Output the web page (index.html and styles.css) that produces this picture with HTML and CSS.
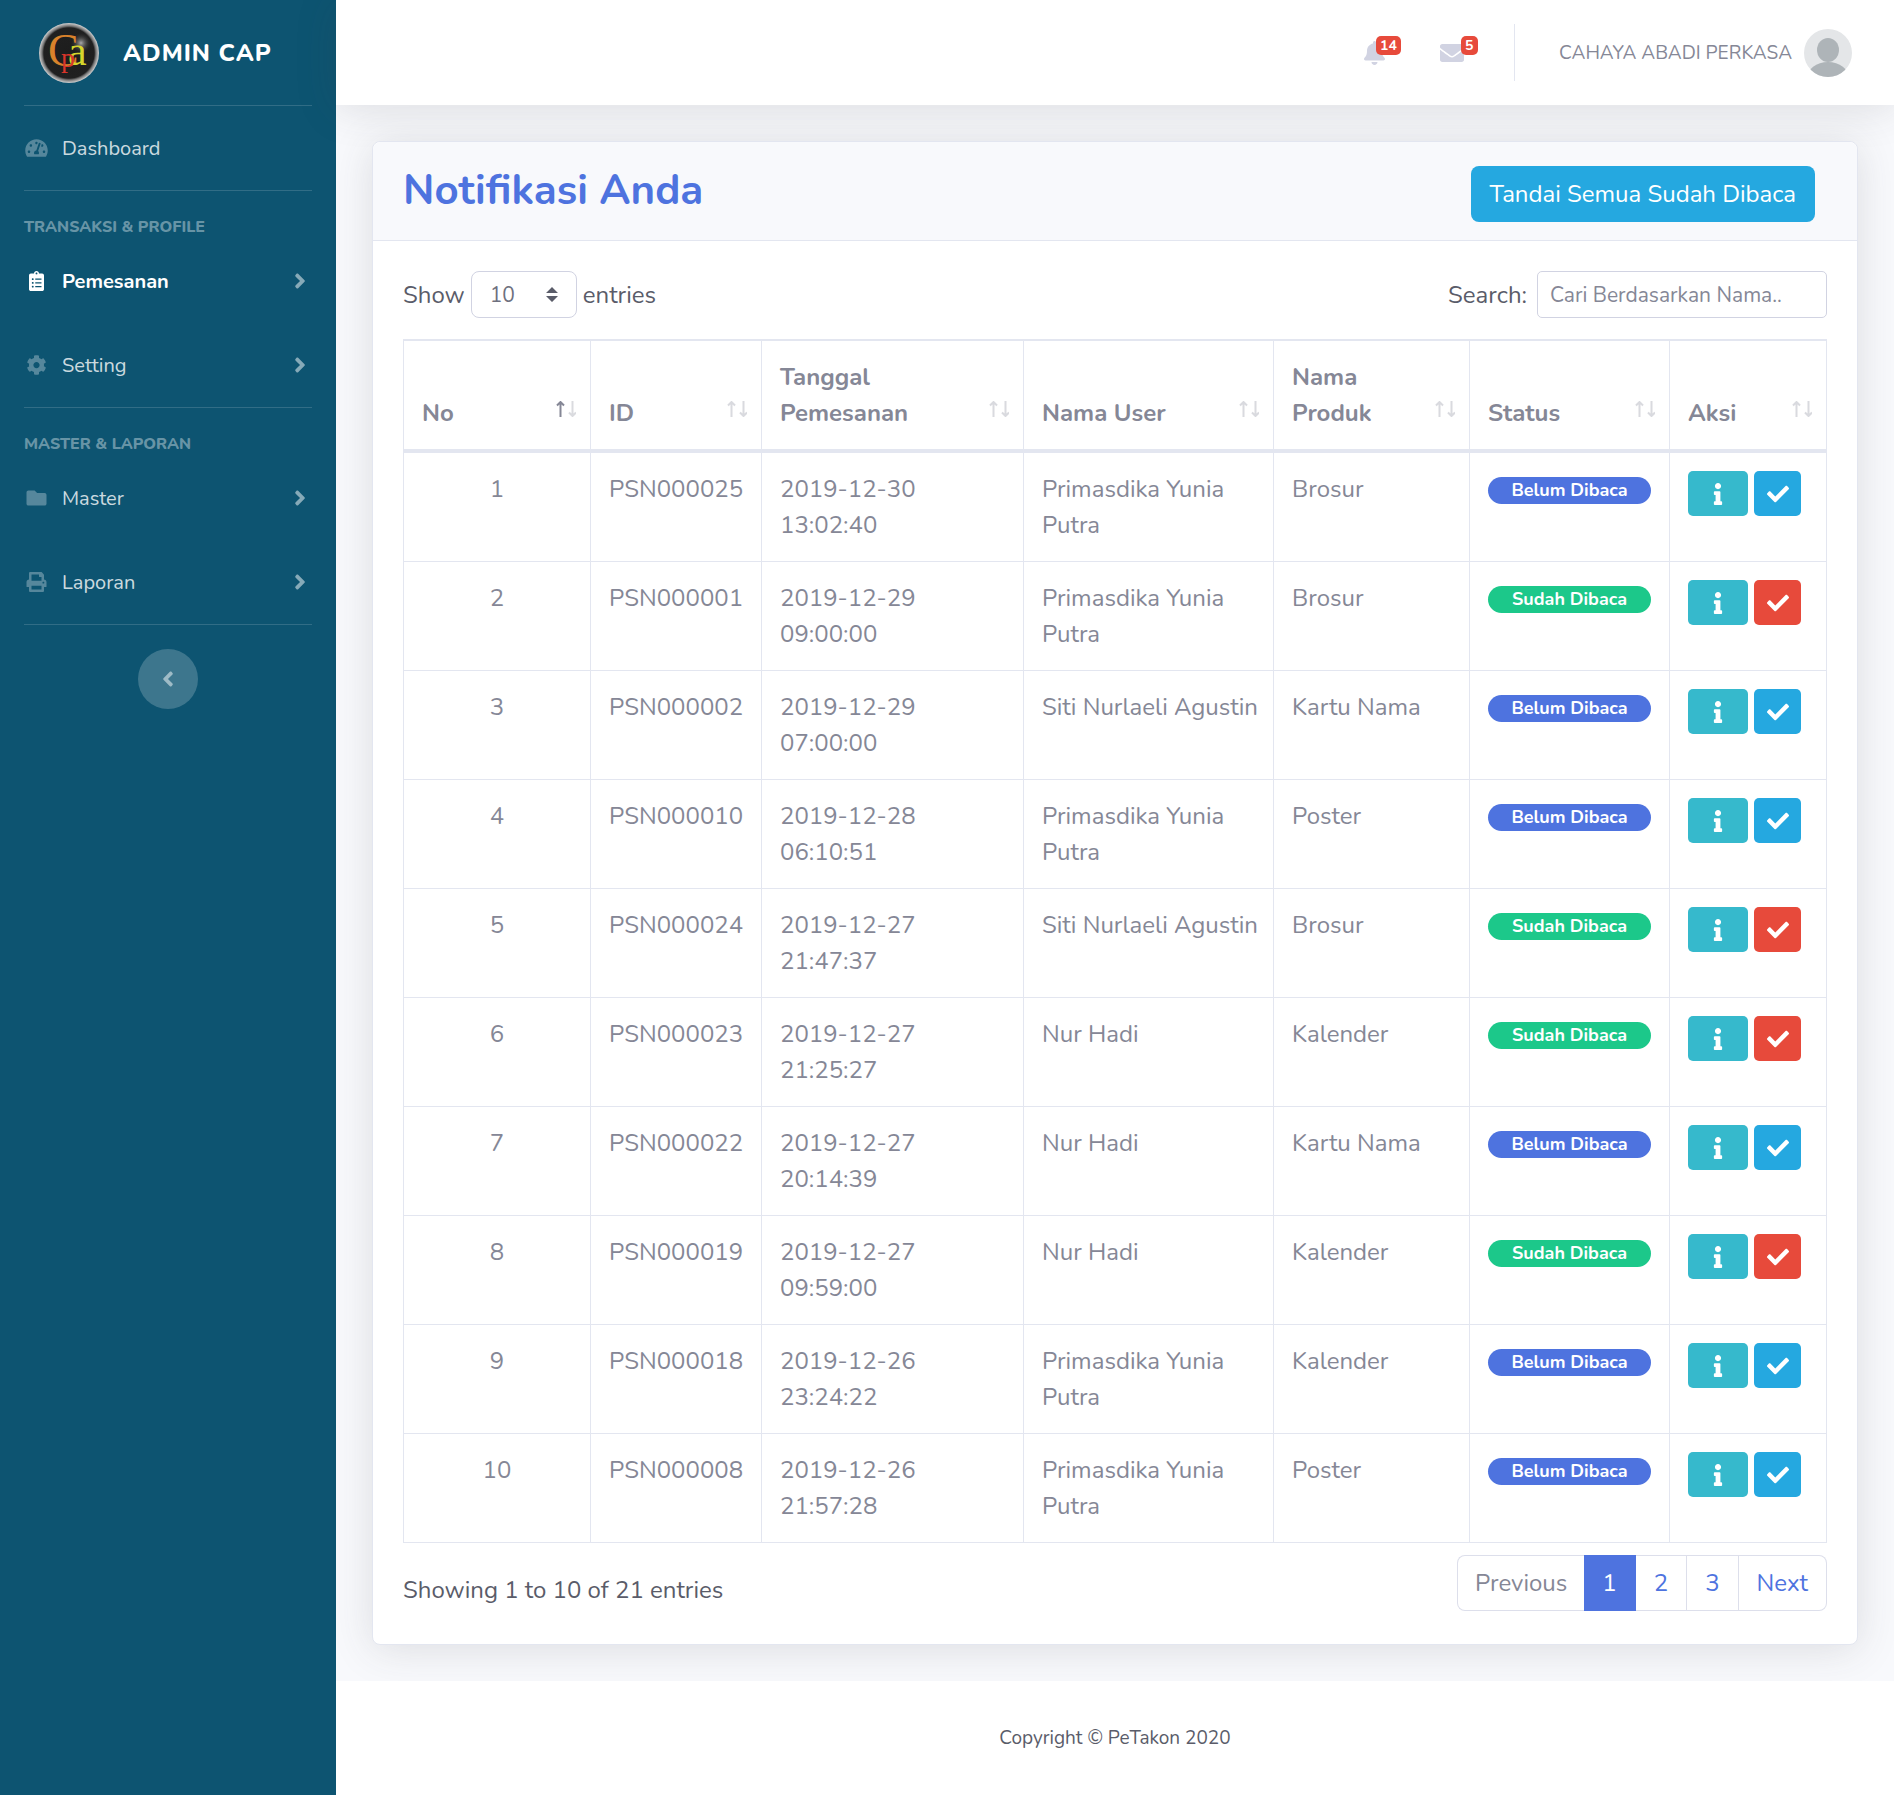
FILE: index.html
```html
<!DOCTYPE html>
<html lang="id">
<head>
<meta charset="utf-8">
<meta name="viewport" content="width=device-width, initial-scale=1">
<title>Notifikasi Anda - Admin CAP</title>
<link rel="stylesheet" href="styles.css">
</head>
<body>
<svg class="sprite" aria-hidden="true">
  <symbol id="i-dash" viewBox="0 0 576 512"><path d="M288 32C128.94 32 0 160.94 0 320c0 52.8 14.25 102.26 39.06 144.8 5.61 9.62 16.3 15.2 27.44 15.2h443c11.14 0 21.83-5.58 27.44-15.2C561.75 422.26 576 372.8 576 320c0-159.06-128.94-288-288-288zm0 64c14.71 0 26.58 10.13 30.32 23.65-1.11 2.26-2.64 4.23-3.45 6.67l-9.22 27.67c-5.13 3.49-10.97 6.01-17.64 6.01-17.67 0-32-14.33-32-32S270.33 96 288 96zM96 384c-17.67 0-32-14.33-32-32s14.33-32 32-32 32 14.33 32 32-14.33 32-32 32zm48-160c-17.67 0-32-14.33-32-32s14.33-32 32-32 32 14.33 32 32-14.33 32-32 32zm246.77-72.41l-61.33 184C343.13 347.33 352 364.54 352 384c0 11.72-3.38 22.55-8.88 32H232.88c-5.5-9.45-8.88-20.28-8.88-32 0-33.94 26.5-61.43 59.9-63.59l61.34-184.01c4.17-12.56 17.73-19.45 30.36-15.17 12.57 4.19 19.35 17.79 15.17 30.36zm14.66 57.2l15.52-46.55c3.47-1.29 7.13-2.23 11.05-2.23 17.67 0 32 14.33 32 32s-14.33 32-32 32c-11.38-.01-20.89-6.28-26.57-15.22zM480 384c-17.67 0-32-14.33-32-32s14.33-32 32-32 32 14.33 32 32-14.33 32-32 32z"/></symbol>
  <symbol id="i-clip" viewBox="0 0 384 512"><path d="M336 64h-80c0-35.3-28.7-64-64-64s-64 28.7-64 64H48C21.5 64 0 85.5 0 112v352c0 26.5 21.5 48 48 48h288c26.5 0 48-21.5 48-48V112c0-26.5-21.5-48-48-48zM96 424c-13.3 0-24-10.7-24-24s10.7-24 24-24 24 10.7 24 24-10.7 24-24 24zm0-96c-13.3 0-24-10.7-24-24s10.7-24 24-24 24 10.7 24 24-10.7 24-24 24zm0-96c-13.3 0-24-10.7-24-24s10.7-24 24-24 24 10.7 24 24-10.7 24-24 24zm96-192c13.3 0 24 10.7 24 24s-10.7 24-24 24-24-10.7-24-24 10.7-24 24-24zm128 368c0 4.4-3.6 8-8 8H168c-4.4 0-8-3.6-8-8v-16c0-4.4 3.6-8 8-8h144c4.4 0 8 3.6 8 8v16zm0-96c0 4.4-3.6 8-8 8H168c-4.4 0-8-3.6-8-8v-16c0-4.4 3.6-8 8-8h144c4.4 0 8 3.6 8 8v16zm0-96c0 4.4-3.6 8-8 8H168c-4.4 0-8-3.6-8-8v-16c0-4.4 3.6-8 8-8h144c4.4 0 8 3.6 8 8v16z"/></symbol>
  <symbol id="i-cog" viewBox="0 0 512 512"><path d="M487.4 315.7l-42.6-24.6c4.3-23.2 4.3-47 0-70.2l42.6-24.6c4.9-2.8 7.1-8.6 5.5-14-11.1-35.6-30-67.8-54.7-94.6-3.8-4.1-10-5.1-14.8-2.3L380.8 110c-17.9-15.4-38.5-27.3-60.8-35.1V25.8c0-5.6-3.9-10.5-9.4-11.7-36.7-8.2-74.3-7.8-109.2 0-5.5 1.2-9.4 6.1-9.4 11.7V75c-22.2 7.9-42.8 19.8-60.8 35.1L88.7 85.5c-4.9-2.8-11-1.9-14.8 2.3-24.7 26.7-43.6 58.9-54.7 94.6-1.7 5.4.6 11.2 5.5 14L67.3 221c-4.3 23.2-4.3 47 0 70.2l-42.6 24.6c-4.9 2.8-7.1 8.6-5.5 14 11.1 35.6 30 67.8 54.7 94.6 3.8 4.1 10 5.1 14.8 2.3l42.6-24.6c17.9 15.4 38.5 27.3 60.8 35.1v49.2c0 5.6 3.9 10.5 9.4 11.7 36.7 8.2 74.3 7.8 109.2 0 5.5-1.2 9.4-6.1 9.4-11.7v-49.2c22.2-7.9 42.8-19.8 60.8-35.1l42.6 24.6c4.9 2.8 11 1.9 14.8-2.3 24.7-26.7 43.6-58.9 54.7-94.6 1.5-5.5-.7-11.3-5.6-14.1zM256 336c-44.1 0-80-35.9-80-80s35.9-80 80-80 80 35.9 80 80-35.9 80-80 80z"/></symbol>
  <symbol id="i-folder" viewBox="0 0 512 512"><path d="M464 128H272l-64-64H48C21.49 64 0 85.49 0 112v288c0 26.51 21.49 48 48 48h416c26.51 0 48-21.49 48-48V176c0-26.51-21.49-48-48-48z"/></symbol>
  <symbol id="i-print" viewBox="0 0 512 512"><path d="M448 192V77.25c0-8.49-3.37-16.62-9.37-22.63L393.37 9.37c-6-6-14.14-9.37-22.63-9.37H96C78.33 0 64 14.33 64 32v160c-35.35 0-64 28.65-64 64v112c0 8.84 7.16 16 16 16h48v96c0 17.67 14.33 32 32 32h320c17.67 0 32-14.33 32-32v-96h48c8.84 0 16-7.16 16-16V256c0-35.35-28.65-64-64-64zm-64 256H128v-96h256v96zm0-224H128V64h192v48c0 8.84 7.16 16 16 16h48v96zm48 72c-13.25 0-24-10.75-24-24 0-13.26 10.75-24 24-24s24 10.74 24 24c0 13.25-10.75 24-24 24z"/></symbol>
  <symbol id="i-angle" viewBox="0 0 256 512"><path d="M224.3 273l-136 136c-9.4 9.4-24.6 9.4-33.9 0l-22.6-22.6c-9.4-9.4-9.4-24.6 0-33.9l96.4-96.4-96.4-96.4c-9.4-9.4-9.4-24.6 0-33.9L54.3 103c9.4-9.4 24.6-9.4 33.9 0l136 136c9.5 9.4 9.5 24.6.1 34z"/></symbol>
  <symbol id="i-bell" viewBox="0 0 448 512"><path d="M224 512c35.32 0 63.97-28.65 63.97-64H160.03c0 35.35 28.65 64 63.97 64zm215.39-149.71c-19.32-20.76-55.47-51.99-55.47-154.29 0-77.7-54.48-139.9-127.94-155.16V32c0-17.67-14.32-32-31.98-32s-31.98 14.33-31.98 32v20.84C118.56 68.1 64.08 130.3 64.08 208c0 102.3-36.15 133.53-55.47 154.29-6 6.45-8.66 14.16-8.61 21.71.11 16.4 12.98 32 32.1 32h383.8c19.12 0 32-15.6 32.1-32 .05-7.55-2.61-15.27-8.61-21.71z"/></symbol>
  <symbol id="i-mail" viewBox="0 0 512 512"><path d="M502.3 190.8c3.9-3.1 9.7-.2 9.7 4.7V400c0 26.5-21.5 48-48 48H48c-26.5 0-48-21.5-48-48V195.6c0-5 5.7-7.8 9.7-4.7 22.4 17.4 52.1 39.5 154.1 113.6 21.1 15.4 56.7 47.8 92.2 47.6 35.7.3 72-32.8 92.3-47.6 102-74.1 131.6-96.3 154-113.7zM256 320c23.2.4 56.6-29.2 73.4-41.4 132.7-96.3 142.8-104.7 173.4-128.7 5.8-4.5 9.2-11.5 9.2-18.9v-19c0-26.5-21.5-48-48-48H48c-26.5 0-48 21.5-48 48v19c0 7.4 3.4 14.3 9.2 18.9 30.6 23.9 40.7 32.4 173.4 128.7 16.8 12.2 50.2 41.8 73.4 41.4z"/></symbol>
  <symbol id="i-info" viewBox="0 0 192 512"><path d="M20 424.229h20V279.771H20c-11.046 0-20-8.954-20-20V212c0-11.046 8.954-20 20-20h112c11.046 0 20 8.954 20 20v212.229h20c11.046 0 20 8.954 20 20V492c0 11.046-8.954 20-20 20H20c-11.046 0-20-8.954-20-20v-47.771c0-11.046 8.954-20 20-20zM96 0C56.235 0 24 32.235 24 72s32.235 72 72 72 72-32.235 72-72S135.764 0 96 0z"/></symbol>
  <symbol id="i-check" viewBox="0 0 512 512"><path d="M173.898 439.404l-166.4-166.4c-9.997-9.997-9.997-26.206 0-36.204l36.203-36.204c9.997-9.998 26.207-9.998 36.204 0L192 312.69 432.095 72.596c9.997-9.997 26.207-9.997 36.204 0l36.203 36.204c9.997 9.997 9.997 26.206 0 36.204l-294.4 294.401c-9.998 9.997-26.207 9.997-36.204-.001z"/></symbol>
  <symbol id="i-sort" viewBox="0 0 20 16"><path class="up" d="M4.5 16V1.5M1 4.5L4.5 1L8 4.5"/><path class="down" d="M16.5 0V14.5M13 11.5L16.5 15L20 11.5"/></symbol>
</svg>

<div class="wrapper">
  <nav class="sidebar" aria-label="Menu utama">
    <a class="brand" href="#">
      <svg class="logo" viewBox="0 0 60 60" role="img" aria-label="Logo CAP">
        <defs>
          <radialGradient id="disc"><stop offset="0" stop-color="#1d1d1d"/><stop offset=".84" stop-color="#202020"/><stop offset=".9" stop-color="#777"/><stop offset="1" stop-color="#d2d2d2"/></radialGradient>
          <radialGradient id="shine"><stop offset="0" stop-color="#aaa"/><stop offset="1" stop-color="#333" stop-opacity="0"/></radialGradient>
        </defs>
        <circle cx="30" cy="30" r="30" fill="url(#disc)"/>
        <circle cx="42" cy="20" r="10" fill="url(#shine)"/>
        <text class="logo-letter" x="9" y="43" font-size="46" fill="#d9822b">C</text>
        <text class="logo-letter" x="29" y="42" font-size="42" fill="#d6d62c">a</text>
        <text class="logo-letter" x="22" y="44" font-size="28" fill="#d8352a">p</text>
      </svg>
      <span>ADMIN CAP</span>
    </a>
    <hr>
    <a class="nav-link" href="#"><svg><use href="#i-dash"/></svg><span>Dashboard</span></a>
    <hr>
    <div class="nav-heading">TRANSAKSI &amp; PROFILE</div>
    <a class="nav-link active" href="#"><svg><use href="#i-clip"/></svg><span>Pemesanan</span><svg class="angle"><use href="#i-angle"/></svg></a>
    <a class="nav-link" href="#"><svg><use href="#i-cog"/></svg><span>Setting</span><svg class="angle"><use href="#i-angle"/></svg></a>
    <hr>
    <div class="nav-heading">MASTER &amp; LAPORAN</div>
    <a class="nav-link" href="#"><svg><use href="#i-folder"/></svg><span>Master</span><svg class="angle"><use href="#i-angle"/></svg></a>
    <a class="nav-link" href="#"><svg><use href="#i-print"/></svg><span>Laporan</span><svg class="angle"><use href="#i-angle"/></svg></a>
    <hr>
    <button class="toggle" type="button" aria-label="Ciutkan menu"><svg><use href="#i-angle"/></svg></button>
  </nav>

  <div class="content">
    <header class="topbar">
      <a class="alert-link" href="#" aria-label="Notifikasi"><svg class="bell"><use href="#i-bell"/></svg><span class="counter">14</span></a>
      <a class="alert-link" href="#" aria-label="Pesan"><svg class="mail"><use href="#i-mail"/></svg><span class="counter">5</span></a>
      <a class="user" href="#"><span>CAHAYA ABADI PERKASA</span>
        <svg class="avatar" viewBox="0 0 48 48" aria-hidden="true"><defs><clipPath id="round"><circle cx="24" cy="24" r="24"/></clipPath></defs><g clip-path="url(#round)"><rect width="48" height="48" fill="#e4e6e8"/><ellipse cx="24" cy="21" rx="11" ry="12" fill="#aeb4b8"/><ellipse cx="24" cy="49" rx="21" ry="16" fill="#aeb4b8"/></g></svg>
      </a>
    </header>

    <main>
      <section class="card">
        <div class="card-header">
          <h1>Notifikasi Anda</h1>
          <button class="btn-all" type="button">Tandai Semua Sudah Dibaca</button>
        </div>
        <div class="card-body">
          <div class="controls">
            <label>Show <select><option>10</option><option>25</option><option>50</option><option>100</option></select> entries</label>
            <label class="search">Search: <input type="search" placeholder="Cari Berdasarkan Nama.."></label>
          </div>
          <table>
            <colgroup><col class="c-no"><col class="c-id"><col class="c-date"><col class="c-user"><col class="c-product"><col class="c-status"><col class="c-action"></colgroup>
            <thead>
              <tr>
                <th><div class="th sorted"><span>No</span><svg><use href="#i-sort"/></svg></div></th>
                <th><div class="th"><span>ID</span><svg><use href="#i-sort"/></svg></div></th>
                <th><div class="th"><span>Tanggal Pemesanan</span><svg><use href="#i-sort"/></svg></div></th>
                <th><div class="th"><span>Nama User</span><svg><use href="#i-sort"/></svg></div></th>
                <th><div class="th"><span>Nama Produk</span><svg><use href="#i-sort"/></svg></div></th>
                <th><div class="th"><span>Status</span><svg><use href="#i-sort"/></svg></div></th>
                <th><div class="th"><span>Aksi</span><svg><use href="#i-sort"/></svg></div></th>
              </tr>
            </thead>
            <tbody>
              <tr><td>1</td><td>PSN000025</td><td>2019-12-30 13:02:40</td><td>Primasdika Yunia Putra</td><td>Brosur</td><td><span class="badge unread">Belum Dibaca</span></td><td><div class="actions"><button class="info" aria-label="Detail"><svg><use href="#i-info"/></svg></button><button class="mark" aria-label="Tandai"><svg><use href="#i-check"/></svg></button></div></td></tr>
              <tr><td>2</td><td>PSN000001</td><td>2019-12-29 09:00:00</td><td>Primasdika Yunia Putra</td><td>Brosur</td><td><span class="badge read">Sudah Dibaca</span></td><td><div class="actions"><button class="info" aria-label="Detail"><svg><use href="#i-info"/></svg></button><button class="mark done" aria-label="Tandai"><svg><use href="#i-check"/></svg></button></div></td></tr>
              <tr><td>3</td><td>PSN000002</td><td>2019-12-29 07:00:00</td><td>Siti Nurlaeli Agustin</td><td>Kartu Nama</td><td><span class="badge unread">Belum Dibaca</span></td><td><div class="actions"><button class="info" aria-label="Detail"><svg><use href="#i-info"/></svg></button><button class="mark" aria-label="Tandai"><svg><use href="#i-check"/></svg></button></div></td></tr>
              <tr><td>4</td><td>PSN000010</td><td>2019-12-28 06:10:51</td><td>Primasdika Yunia Putra</td><td>Poster</td><td><span class="badge unread">Belum Dibaca</span></td><td><div class="actions"><button class="info" aria-label="Detail"><svg><use href="#i-info"/></svg></button><button class="mark" aria-label="Tandai"><svg><use href="#i-check"/></svg></button></div></td></tr>
              <tr><td>5</td><td>PSN000024</td><td>2019-12-27 21:47:37</td><td>Siti Nurlaeli Agustin</td><td>Brosur</td><td><span class="badge read">Sudah Dibaca</span></td><td><div class="actions"><button class="info" aria-label="Detail"><svg><use href="#i-info"/></svg></button><button class="mark done" aria-label="Tandai"><svg><use href="#i-check"/></svg></button></div></td></tr>
              <tr><td>6</td><td>PSN000023</td><td>2019-12-27 21:25:27</td><td>Nur Hadi</td><td>Kalender</td><td><span class="badge read">Sudah Dibaca</span></td><td><div class="actions"><button class="info" aria-label="Detail"><svg><use href="#i-info"/></svg></button><button class="mark done" aria-label="Tandai"><svg><use href="#i-check"/></svg></button></div></td></tr>
              <tr><td>7</td><td>PSN000022</td><td>2019-12-27 20:14:39</td><td>Nur Hadi</td><td>Kartu Nama</td><td><span class="badge unread">Belum Dibaca</span></td><td><div class="actions"><button class="info" aria-label="Detail"><svg><use href="#i-info"/></svg></button><button class="mark" aria-label="Tandai"><svg><use href="#i-check"/></svg></button></div></td></tr>
              <tr><td>8</td><td>PSN000019</td><td>2019-12-27 09:59:00</td><td>Nur Hadi</td><td>Kalender</td><td><span class="badge read">Sudah Dibaca</span></td><td><div class="actions"><button class="info" aria-label="Detail"><svg><use href="#i-info"/></svg></button><button class="mark done" aria-label="Tandai"><svg><use href="#i-check"/></svg></button></div></td></tr>
              <tr><td>9</td><td>PSN000018</td><td>2019-12-26 23:24:22</td><td>Primasdika Yunia Putra</td><td>Kalender</td><td><span class="badge unread">Belum Dibaca</span></td><td><div class="actions"><button class="info" aria-label="Detail"><svg><use href="#i-info"/></svg></button><button class="mark" aria-label="Tandai"><svg><use href="#i-check"/></svg></button></div></td></tr>
              <tr><td>10</td><td>PSN000008</td><td>2019-12-26 21:57:28</td><td>Primasdika Yunia Putra</td><td>Poster</td><td><span class="badge unread">Belum Dibaca</span></td><td><div class="actions"><button class="info" aria-label="Detail"><svg><use href="#i-info"/></svg></button><button class="mark" aria-label="Tandai"><svg><use href="#i-check"/></svg></button></div></td></tr>
            </tbody>
          </table>
          <div class="table-footer">
            <div>Showing 1 to 10 of 21 entries</div>
            <nav class="pagination" aria-label="Halaman">
              <a class="disabled" href="#">Previous</a><a class="current" href="#">1</a><a href="#">2</a><a href="#">3</a><a href="#">Next</a>
            </nav>
          </div>
        </div>
      </section>
    </main>

    <footer>Copyright © PeTakon 2020</footer>
  </div>
</div>
</body>
</html>
```
FILE: styles.css
```css
* {
  box-sizing: border-box;
}

body {
  margin: 0;
  font-family: Nunito, Lato, "Open Sans", sans-serif;
  font-size: 24px;
  line-height: 36px;
  color: #5a5c69;
  background: #f8f9fc;
}

a {
  text-decoration: none;
}

button,
input,
select {
  font-family: inherit;
}

button {
  border: 0;
  padding: 0;
  cursor: pointer;
}

svg {
  fill: currentColor;
  flex: none;
}

.sprite {
  display: none;
}

.wrapper {
  display: flex;
  min-height: 100vh;
}

/* Sidebar */
.sidebar {
  flex: none;
  width: 336px;
  display: flex;
  flex-direction: column;
  background: #0d5471;
}

.brand {
  height: 105px;
  padding-left: 39px;
  display: flex;
  align-items: center;
  gap: 24px;
  color: #fff;
  font-weight: 800;
  letter-spacing: 1px;
}

.logo {
  width: 60px;
  height: 60px;
}

.logo-letter {
  font-family: "Liberation Serif", serif;
  letter-spacing: 0;
  font-weight: 400;
}

.sidebar hr {
  width: 288px;
  height: 1px;
  margin: 0 24px;
  border: 0;
  background: rgba(255, 255, 255, 0.15);
}

.nav-heading {
  margin-top: 24px;
  padding: 0 24px;
  font-size: 16px;
  line-height: 24px;
  font-weight: 800;
  color: rgba(255, 255, 255, 0.4);
}

.nav-link {
  height: 84px;
  padding: 0 30px 0 24px;
  display: flex;
  align-items: center;
  gap: 13px;
  font-size: 20px;
  color: rgba(255, 255, 255, 0.8);
}

.nav-link span {
  flex: 1;
  padding-top: 2px;
}

.nav-link svg {
  width: 25px;
  height: 20px;
  color: rgba(255, 255, 255, 0.3);
}

.nav-link .angle {
  width: 12px;
  height: 24px;
  color: rgba(255, 255, 255, 0.5);
}

.nav-link.active {
  font-weight: 700;
  color: #fff;
}

.nav-link.active svg:first-child {
  color: #fff;
}

.toggle {
  align-self: center;
  width: 60px;
  height: 60px;
  margin-top: 24px;
  border-radius: 50%;
  background: rgba(255, 255, 255, 0.2);
  color: rgba(255, 255, 255, 0.5);
  display: flex;
  align-items: center;
  justify-content: center;
}

.toggle svg {
  width: 12px;
  height: 24px;
  transform: rotate(180deg);
}

/* Top bar */
.content {
  flex: 1;
  min-width: 0;
  display: flex;
  flex-direction: column;
}

.topbar {
  height: 105px;
  padding-right: 42px;
  display: flex;
  align-items: center;
  justify-content: flex-end;
  background: #fff;
  box-shadow: 0 4px 42px rgba(58, 59, 69, 0.15);
}

.alert-link {
  position: relative;
  width: 77px;
  height: 60px;
  display: flex;
  align-items: center;
  justify-content: center;
  color: #d1d3e2;
}

.bell {
  width: 21px;
  height: 24px;
}

.mail {
  width: 24px;
  height: 24px;
}

.counter {
  position: absolute;
  left: 40px;
  top: 13px;
  padding: 0 4px;
  border-radius: 5px;
  background: #e74a3b;
  color: #fff;
  font-size: 14px;
  line-height: 19px;
  font-weight: 700;
}

.mail + .counter {
  left: 48px;
}

.user {
  height: 57px;
  margin-left: 24px;
  padding-left: 44px;
  border-left: 1px solid #e3e6f0;
  display: flex;
  align-items: center;
  gap: 12px;
  font-size: 19px;
  color: #858796;
}

.avatar {
  width: 48px;
  height: 48px;
}

/* Card */
main {
  padding: 36px;
}

.card {
  border: 1px solid #e3e6f0;
  border-radius: 8px;
  background: #fff;
  box-shadow: 0 4px 42px rgba(58, 59, 69, 0.15);
}

.card-header {
  padding: 24px 42px 18px 30px;
  display: flex;
  align-items: flex-start;
  justify-content: space-between;
  border-bottom: 1px solid #e3e6f0;
  border-radius: 8px 8px 0 0;
  background: #f8f9fc;
}

h1 {
  margin: 0;
  font-size: 42px;
  line-height: 50px;
  font-weight: 700;
  color: #4e73df;
}

.btn-all {
  height: 56px;
  padding: 0 19px;
  border-radius: 8px;
  background: #25a8e0;
  color: #fff;
  font-size: 24px;
}

.card-body {
  padding: 30px 30px 33px;
}

.controls {
  display: flex;
  justify-content: space-between;
  margin-bottom: 21px;
}

.controls label {
  display: flex;
  align-items: center;
  gap: 6px;
}

.controls .search {
  gap: 10px;
}

select,
input {
  height: 47px;
  border: 1px solid #d1d3e2;
  background-color: #fff;
  color: #6e707e;
  font-size: 21px;
}

select {
  width: 106px;
  padding: 0 18px;
  border-radius: 8px;
  appearance: none;
  background-image: url("data:image/svg+xml,%3Csvg xmlns='http://www.w3.org/2000/svg' viewBox='0 0 4 5'%3E%3Cpath fill='%235a5c69' d='M2 0L0 2h4zm0 5L0 3h4z'/%3E%3C/svg%3E");
  background-repeat: no-repeat;
  background-position: right 18px center;
  background-size: 12px 15px;
}

input {
  width: 290px;
  padding: 0 12px;
  border-radius: 5px;
}

input::placeholder {
  color: #858796;
  opacity: 1;
}

/* Table */
table {
  width: 100%;
  table-layout: fixed;
  border-collapse: separate;
  border-spacing: 0;
  border-left: 1px solid #e3e6f0;
  border-top: 2px solid #e3e6f0;
  color: #858796;
}

.c-no { width: 187px; }
.c-id { width: 171px; }
.c-date { width: 262px; }
.c-user { width: 250px; }
.c-product { width: 196px; }
.c-status { width: 200px; }
.c-action { width: 157px; }

th,
td {
  border-right: 1px solid #e3e6f0;
  border-bottom: 1px solid #e3e6f0;
  text-align: left;
}

th {
  padding: 18px 14px 18px 18px;
  border-bottom-width: 4px;
  vertical-align: bottom;
}

td {
  height: 109px;
  padding: 18px;
  vertical-align: top;
}

td:first-child {
  text-align: center;
}

td:nth-child(4) {
  padding-right: 12px;
}

.th {
  display: flex;
  align-items: flex-end;
  justify-content: space-between;
  gap: 24px;
}

.th svg {
  width: 20px;
  height: 16px;
  margin-bottom: 14px;
  fill: none;
  stroke: #858796;
  stroke-width: 2;
  opacity: 0.3;
}

.th.sorted svg {
  opacity: 1;
}

.th.sorted {
  --down-opacity: 0.3;
}

.down {
  opacity: var(--down-opacity, 1);
}

.badge {
  display: block;
  margin-top: 6px;
  border-radius: 15px;
  color: #fff;
  font-size: 18px;
  line-height: 27px;
  font-weight: 700;
  text-align: center;
}

.unread {
  background: #4e73df;
}

.read {
  background: #1cc88a;
}

.actions {
  display: flex;
  gap: 6px;
}

.actions button {
  width: 47px;
  height: 45px;
  border-radius: 5px;
  color: #fff;
  display: flex;
  align-items: center;
  justify-content: center;
}

.actions .info {
  width: 60px;
  background: #36b9cc;
}

.actions .mark {
  background: #25a8e0;
}

.actions .done {
  background: #e74a3b;
}

.actions svg {
  width: 22px;
  height: 22px;
}

.table-footer {
  margin-top: 12px;
  display: flex;
  justify-content: space-between;
}

.table-footer > div {
  padding-top: 17px;
}

.pagination {
  display: flex;
}

.pagination a {
  height: 56px;
  padding: 9px 18px;
  border: 1px solid #dddfeb;
  border-left-width: 0;
  color: #4e73df;
}

.pagination a:first-child {
  padding: 9px 17px;
  border-left-width: 1px;
  border-radius: 8px 0 0 8px;
}

.pagination a:last-child {
  border-radius: 0 8px 8px 0;
}

.pagination .disabled {
  color: #858796;
  border-right-width: 0;
}

.pagination .current {
  border-color: #4e73df;
  background: #4e73df;
  color: #fff;
}

footer {
  flex: 1;
  display: flex;
  align-items: center;
  justify-content: center;
  background: #fff;
  font-size: 19px;
  min-height: 114px;
}
```
